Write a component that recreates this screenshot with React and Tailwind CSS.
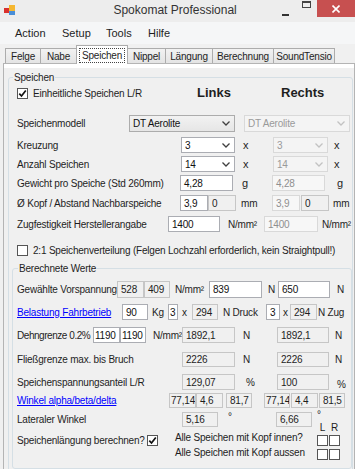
import React from "react";

const AppIcon = () => (
  <svg width="12" height="12" viewBox="0 0 12 12">
    <rect x="5" y="1" width="6" height="6" fill="#f5b731" />
    <rect x="0" y="4" width="5" height="5" fill="#d9302c" />
    <rect x="5" y="7" width="6" height="4" fill="#4a8fd8" />
    <rect x="1" y="9" width="4" height="2" fill="#e9e9e9" />
  </svg>
);

const Chevron = ({ color = "#404040" }) => (
  <svg width="8" height="5" viewBox="0 0 8 5">
    <path d="M0.5 0.5 L4 4 L7.5 0.5" stroke={color} strokeWidth="1.3" fill="none" />
  </svg>
);

const boxStyles = {
  edit: "bg-white border-[#abadb3] text-[#111]",
  ro: "bg-[#f0f0f0] border-[#c6c6c6] text-[#1e1e1e]",
  dis: "bg-[#f7f7f7] border-[#d9d9d9] text-[#8f8f8f]",
};

const Box = ({ w, v, kind = "ro", tight = false, className = "" }) => (
  <div
    className={`${w} h-full shrink-0 border ${boxStyles[kind]} ${
      tight ? "pl-[1px]" : "pl-[3px]"
    } flex items-center overflow-hidden whitespace-nowrap ${className}`}
  >
    {v}
  </div>
);

const Combo = ({ w, v, kind = "edit" }) => {
  const dis = kind === "dis";
  const list = kind === "list";
  return (
    <div
      className={`${w} h-full shrink-0 border flex items-center justify-between pl-[3px] pr-[4px] ${
        dis
          ? "border-[#d9d9d9] bg-[#f4f4f4] text-[#9a9a9a]"
          : list
          ? "border-[#acacac] bg-gradient-to-b from-[#f2f2f2] to-[#e6e6e6] text-[#111]"
          : "border-[#abadb3] bg-white text-[#111]"
      }`}
    >
      <span>{v}</span>
      <Chevron color={dis ? "#c2c2c2" : "#404040"} />
    </div>
  );
};

const Check = ({ on }) => (
  <div className="w-[11px] h-[11px] shrink-0 border border-[#555] bg-white flex items-center justify-center">
    {on && (
      <svg width="9" height="9" viewBox="0 0 9 9">
        <path d="M1.3 4.6 L3.5 7 L7.8 1.4" stroke="#111" strokeWidth="1.7" fill="none" />
      </svg>
    )}
  </div>
);

const tabs = [
  { t: "Felge", w: "w-[35px]" },
  { t: "Nabe", w: "w-[36px]" },
  { t: "Speichen", w: "w-[52px]", on: true },
  { t: "Nippel", w: "w-[37px]" },
  { t: "Längung", w: "w-[47px]" },
  { t: "Berechnung", w: "w-[61px]" },
  { t: "SoundTensio", w: "w-[62px]" },
];

export default function App() {
  return (
    <div className="w-[355px] h-[469px] overflow-hidden bg-[#f0f0f0] font-['Liberation_Sans',Arial,sans-serif] text-[#1e1e1e]">
      {/* title bar */}
      <div className="flex items-start h-[22px] bg-[#ededed]">
        <div className="w-[70px] pl-[4px] pt-[4px]">
          <AppIcon />
        </div>
        <div className="w-[220px] text-center text-[12px] leading-[20px] text-[#333]">
          Spokomat Professional
        </div>
        <div className="flex h-[17px]">
          <div className="w-[14px] pt-[14px]">
            <div className="w-[7px] h-[2px] bg-[#333]" />
          </div>
          <div className="w-[21px] pl-[6px] pt-[1px]">
            <div className="w-[9px] h-[7px] border border-t-2 border-[#444]" />
          </div>
          <div className="w-[38px] h-[17px] bg-[#c75050] flex items-center justify-center">
            <svg width="8" height="8" viewBox="0 0 8 8">
              <path d="M0.5 0.5 L7.5 7.5 M7.5 0.5 L0.5 7.5" stroke="#fff" strokeWidth="1.6" />
            </svg>
          </div>
        </div>
      </div>

      {/* menu */}
      <div className="flex items-center h-[22px] pl-[15px] bg-[#f5f6f7] text-[11px]">
        <span className="w-[47px]">Action</span>
        <span className="w-[44px]">Setup</span>
        <span className="w-[42px]">Tools</span>
        <span>Hilfe</span>
      </div>

      {/* tabs */}
      <div className="flex items-end h-[19px] pl-[5px] text-[10px] tracking-[-0.2px]">
        {tabs.map((tab, i) =>
          tab.on ? (
            <div
              key={tab.t}
              className={`${tab.w} h-[19px] -mb-px relative z-10 bg-white border border-b-0 border-[#acacac] px-[2px] pt-[2px] pb-[1px]`}
            >
              <div className="h-full border border-dotted border-[#444] flex items-center justify-center">
                {tab.t}
              </div>
            </div>
          ) : (
            <div
              key={tab.t}
              className={`${tab.w} h-[15px] border-t border-[#acacac] ${
                i === 3 ? "" : "border-l"
              } ${i === tabs.length - 1 ? "border-r" : ""} bg-gradient-to-b from-[#f2f2f2] to-[#e4e4e4] flex items-center justify-center`}
            >
              {tab.t}
            </div>
          )
        )}
      </div>

      {/* tab page */}
      <div className="ml-[3px] w-[352px] h-[420px] border border-[#b4b4b4] bg-white pt-[4px] text-[10px] tracking-[-0.2px] whitespace-nowrap">
        <div className="h-full bg-[#f0f0f0] pl-[4px] pr-[1px] pt-[3px]">
          <fieldset className="border border-[#d5dfe5] rounded-[3px] h-[420px]">
            <legend className="ml-[4px] px-[1px] leading-[13px]">Speichen</legend>
            <div className="pl-[8px]">
              {/* Einheitliche */}
              <div className="flex items-center h-[16px] mt-[1px]">
                <Check on />
                <span className="ml-[5px] w-[164px]">Einheitliche Speichen L/R</span>
                <span className="w-[84px] text-[13px] font-bold tracking-normal">Links</span>
                <span className="text-[13px] font-bold tracking-normal">Rechts</span>
              </div>

              {/* Speichenmodell */}
              <div className="flex items-center h-[17px] mt-[14px]">
                <span className="w-[112px]">Speichenmodell</span>
                <Combo w="w-[106px]" v="DT Aerolite" kind="list" />
                <div className="ml-[9px]">
                  <Combo w="w-[106px]" v="DT Aerolite" kind="dis" />
                </div>
              </div>

              {/* Kreuzung */}
              <div className="flex items-center h-[16px] mt-[5px]">
                <span className="w-[164px]">Kreuzung</span>
                <Combo w="w-[54px]" v="3" />
                <span className="ml-[8px] w-[30px] text-[11px]">x</span>
                <Combo w="w-[55px]" v="3" kind="dis" />
                <span className="ml-[6px] text-[11px]">x</span>
              </div>

              {/* Anzahl */}
              <div className="flex items-center h-[16px] mt-[3px]">
                <span className="w-[164px]">Anzahl Speichen</span>
                <Combo w="w-[54px]" v="14" />
                <span className="ml-[8px] w-[30px] text-[11px]">x</span>
                <Combo w="w-[55px]" v="14" kind="dis" />
                <span className="ml-[6px] text-[11px]">x</span>
              </div>

              {/* Gewicht */}
              <div className="flex items-center h-[16px] mt-[3px]">
                <span className="w-[163px]">Gewicht pro Speiche (Std 260mm)</span>
                <Box w="w-[53px]" v="4,28" kind="edit" />
                <span className="ml-[9px] w-[30px] text-[11px]">g</span>
                <Box w="w-[53px]" v="4,28" kind="dis" />
                <span className="ml-[12px] text-[11px]">g</span>
              </div>

              {/* Kopf */}
              <div className="flex items-center h-[16px] mt-[4px]">
                <span className="w-[163px]">Ø Kopf / Abstand Nachbarspeiche</span>
                <Box w="w-[28px]" v="3,9" kind="edit" />
                <Box w="w-[28px]" v="0" kind="ro" />
                <span className="ml-[5px] w-[31px]">mm</span>
                <Box w="w-[28px]" v="3,9" kind="dis" />
                <Box w="w-[28px]" v="0" kind="ro" className="ml-[1px]" />
                <span className="ml-[4px]">mm</span>
              </div>

              {/* Zugfestigkeit */}
              <div className="flex items-center h-[16px] mt-[5px]">
                <span className="w-[151px]">Zugfestigkeit Herstellerangabe</span>
                <Box w="w-[52px]" v="1400" kind="edit" />
                <span className="ml-[8px] w-[36px]">N/mm²</span>
                <Box w="w-[54px]" v="1400" kind="dis" />
                <span className="ml-[4px]">N/mm²</span>
              </div>

              {/* 2:1 */}
              <div className="flex items-center h-[13px] mt-[12px]">
                <Check />
                <span className="ml-[5px]">
                  2:1 Speichenverteilung (Felgen Lochzahl erforderlich, kein Straightpull!)
                </span>
              </div>

              {/* Berechnete Werte */}
              <fieldset className="border border-[#d5dfe5] rounded-[3px] mt-[5px] -ml-[5px] pb-[8px]">
                <legend className="ml-[5px] px-[1px] leading-[13px]">Berechnete Werte</legend>
                <div className="pl-[4px]">
                  <div className="flex items-center h-[17px] mt-[6px]">
                    <span className="w-[100px]">Gewählte Vorspannung</span>
                    <Box w="w-[27px]" v="528" />
                    <Box w="w-[26px]" v="409" />
                    <span className="ml-[5px] w-[34px]">N/mm²</span>
                    <Box w="w-[53px]" v="839" kind="edit" />
                    <span className="ml-[6px] w-[10px]">N</span>
                    <Box w="w-[52px]" v="650" kind="edit" />
                    <span className="ml-[7px]">N</span>
                  </div>

                  <div className="flex items-center h-[16px] mt-[6px]">
                    <span className="w-[105px] text-[#0000ff] underline">Belastung Fahrbetrieb</span>
                    <Box w="w-[26px]" v="90" kind="edit" />
                    <span className="ml-[4px] w-[16px]">Kg</span>
                    <Box w="w-[10px]" v="3" kind="edit" tight />
                    <span className="ml-[4px] w-[10px]">x</span>
                    <Box w="w-[26px]" v="294" />
                    <span className="ml-[5px] w-[43px]">N Druck</span>
                    <Box w="w-[14px]" v="3" kind="edit" />
                    <span className="ml-[3px] w-[7px]">x</span>
                    <Box w="w-[27px]" v="294" />
                    <span className="ml-[1px]">N Zug</span>
                  </div>

                  <div className="flex items-center h-[16px] mt-[7px]">
                    <span className="w-[76px] tracking-[-0.45px]">Dehngrenze 0.2%</span>
                    <Box w="w-[27px]" v="1190" kind="edit" tight />
                    <Box w="w-[26px]" v="1190" kind="edit" tight />
                    <span className="ml-[7px] w-[29px]">N/mm²</span>
                    <Box w="w-[53px]" v="1892,1" />
                    <span className="ml-[8px] w-[34px]">N</span>
                    <Box w="w-[52px]" v="1892,1" />
                    <span className="ml-[6px]">N</span>
                  </div>

                  <div className="flex items-center h-[15px] mt-[9px]">
                    <span className="w-[165px]">Fließgrenze max. bis Bruch</span>
                    <Box w="w-[53px]" v="2226" />
                    <span className="ml-[8px] w-[34px]">N</span>
                    <Box w="w-[52px]" v="2226" />
                    <span className="ml-[6px]">N</span>
                  </div>

                  <div className="flex items-center h-[16px] mt-[7px]">
                    <span className="w-[165px]">Speichenspannungsanteil L/R</span>
                    <Box w="w-[53px]" v="129,07" />
                    <span className="ml-[11px] w-[31px]">%</span>
                    <Box w="w-[52px]" v="100" />
                    <span className="ml-[8px] self-end leading-[11px]">%</span>
                  </div>

                  <div className="flex items-center h-[15px] mt-[3px]">
                    <span className="w-[152px] text-[#0000ff] underline">Winkel alpha/beta/delta</span>
                    <Box w="w-[27px]" v="77,14" tight />
                    <Box w="w-[27px]" v="4,6" />
                    <Box w="w-[26px]" v="81,7" className="ml-[3px]" />
                    <Box w="w-[26px]" v="77,14" tight className="ml-[12px]" />
                    <Box w="w-[27px]" v="4,4" className="ml-[1px]" />
                    <Box w="w-[26px]" v="81,5" className="ml-[1px]" />
                  </div>

                  <div className="flex items-center h-[15px] mt-[4px]">
                    <span className="w-[165px]">Lateraler Winkel</span>
                    <Box w="w-[36px]" v="5,16" />
                    <span className="ml-[10px] w-[48px] self-start leading-[10px]">°</span>
                    <Box w="w-[36px]" v="6,66" />
                    <span className="ml-[5px] self-start leading-[6px]">°</span>
                  </div>

                  <div className="flex -mt-[4px]">
                    <div className="w-[158px] flex items-center pt-[9px] h-[25px]">
                      <span className="w-[130px]">Speichenlängung berechnen?</span>
                      <Check on />
                    </div>
                    <div className="w-[142px] pt-[7px] leading-[15px]">
                      <div>Alle Speichen mit Kopf innen?</div>
                      <div>Alle Speichen mit Kopf aussen</div>
                    </div>
                    <div className="grid grid-cols-2 gap-x-[1px] gap-y-[2px]">
                      <span className="text-center leading-[10px]">L</span>
                      <span className="text-center leading-[10px]">R</span>
                      <div className="w-[11px] h-[11px] border border-[#555] bg-white" />
                      <div className="w-[11px] h-[11px] border border-[#555] bg-white" />
                      <div className="w-[11px] h-[11px] border border-[#555] bg-white" />
                      <div className="w-[11px] h-[11px] border border-[#555] bg-white" />
                    </div>
                  </div>
                </div>
              </fieldset>
            </div>
          </fieldset>
        </div>
      </div>
    </div>
  );
}
